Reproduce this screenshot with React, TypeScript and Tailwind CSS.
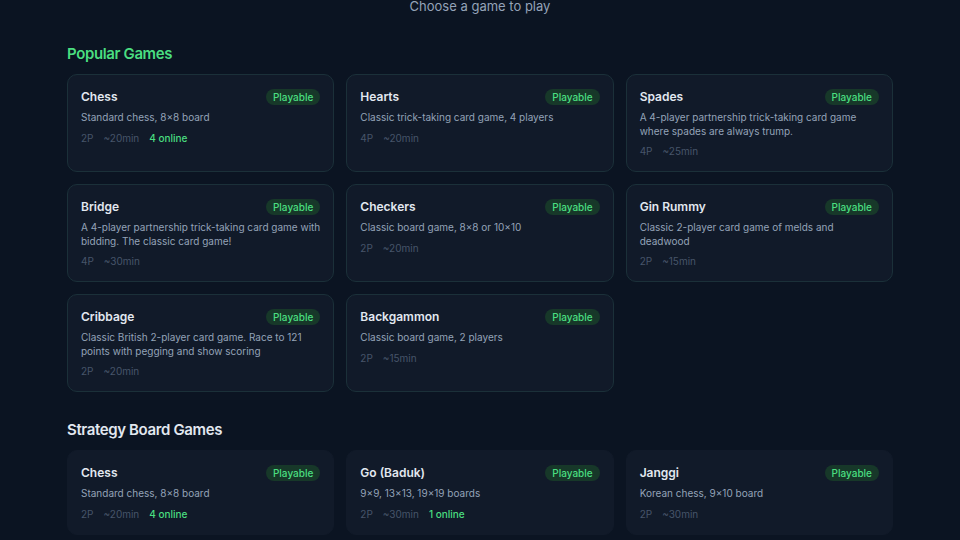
import React from "react";

type Game = {
  name: string;
  desc: string;
  players: string;
  time: string;
  online?: string;
};

const popular: Game[] = [
  { name: "Chess", desc: "Standard chess, 8×8 board", players: "2P", time: "~20min", online: "4 online" },
  { name: "Hearts", desc: "Classic trick-taking card game, 4 players", players: "4P", time: "~20min" },
  { name: "Spades", desc: "A 4-player partnership trick-taking card game where spades are always trump.", players: "4P", time: "~25min" },
  { name: "Bridge", desc: "A 4-player partnership trick-taking card game with bidding. The classic card game!", players: "4P", time: "~30min" },
  { name: "Checkers", desc: "Classic board game, 8×8 or 10×10", players: "2P", time: "~20min" },
  { name: "Gin Rummy", desc: "Classic 2-player card game of melds and deadwood", players: "2P", time: "~15min" },
  { name: "Cribbage", desc: "Classic British 2-player card game. Race to 121 points with pegging and show scoring", players: "2P", time: "~20min" },
  { name: "Backgammon", desc: "Classic board game, 2 players", players: "2P", time: "~15min" },
];

const strategy: Game[] = [
  { name: "Chess", desc: "Standard chess, 8×8 board", players: "2P", time: "~20min", online: "4 online" },
  { name: "Go (Baduk)", desc: "9×9, 13×13, 19×19 boards", players: "2P", time: "~30min", online: "1 online" },
  { name: "Janggi", desc: "Korean chess, 9×10 board", players: "2P", time: "~30min" },
];

function GameCard({ game, bordered }: { game: Game; bordered: boolean }) {
  return (
    <div
      className={`rounded-[10px] bg-[#111a29] px-[13px] pt-[14px] pb-[13px] ${
        bordered ? "border border-[#1b3039]" : "border border-[#111a29]"
      }`}
    >
      <div className="flex items-center justify-between h-4">
        <span className="text-[12px] font-semibold text-[#e2e8f0]">{game.name}</span>
        <span className="rounded-full bg-[#173829] px-[7px] h-4 flex items-center text-[10px] font-medium text-[#4ade80]">
          Playable
        </span>
      </div>
      <p className="mt-[6px] text-[10px] leading-[13.5px] text-[#94a3b8]">{game.desc}</p>
      <div className="mt-[6px] flex gap-[10px] text-[10px] leading-[14px]">
        <span className="text-[#475569]">{game.players}</span>
        <span className="text-[#475569]">{game.time}</span>
        {game.online && <span className="font-medium text-[#4ade80]">{game.online}</span>}
      </div>
    </div>
  );
}

export default function App() {
  return (
    <div
      className="min-h-screen w-full bg-[#0b1422] overflow-hidden"
      style={{ fontFamily: "Inter, 'Noto Sans', sans-serif" }}
    >
      <p className="-mt-[2px] text-center text-[13px] leading-[16px] text-[#94a3b8]">Choose a game to play</p>

      <div className="w-[826px] mx-auto">
        <section className="mt-[30px]">
          <h2 className="text-[15px] font-semibold tracking-tight text-[#4ade80] leading-[20px]">Popular Games</h2>
          <div className="mt-[10px] grid grid-cols-3 gap-[12px]">
            {popular.map((g) => (
              <GameCard key={g.name} game={g} bordered />
            ))}
          </div>
        </section>

        <section className="mt-[28px]">
          <h2 className="text-[15px] font-semibold tracking-tight text-[#e2e8f0] leading-[20px]">Strategy Board Games</h2>
          <div className="mt-[10px] grid grid-cols-3 gap-[12px]">
            {strategy.map((g) => (
              <GameCard key={g.name} game={g} bordered={false} />
            ))}
          </div>
        </section>
      </div>
    </div>
  );
}
